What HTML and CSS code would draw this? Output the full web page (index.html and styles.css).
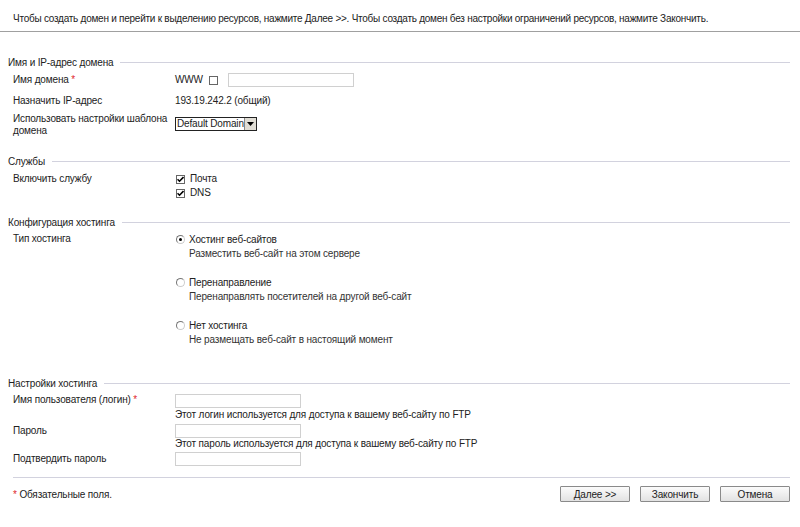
FILE: index.html
```html
<!DOCTYPE html>
<html lang="ru">
<head>
<meta charset="utf-8">
<link rel="stylesheet" href="styles.css">
</head>
<body>
<div class="intro">Чтобы создать домен и перейти к выделению ресурсов, нажмите Далее &gt;&gt;. Чтобы создать домен без настройки ограничений ресурсов, нажмите Закончить.</div>

<div class="legend s1">Имя и IP-адрес домена</div>
<div class="row r-domain">
  <div class="label">Имя домена <span class="req">*</span></div>
  <div class="value inline"><span>WWW</span><span class="cb"></span><span class="input wide"></span></div>
</div>
<div class="row r-ip">
  <div class="label">Назначить IP-адрес</div>
  <div class="value">193.19.242.2 (общий)</div>
</div>
<div class="row r-tpl">
  <div class="label two">Использовать настройки шаблона<br>домена</div>
  <div class="value"><span class="select"><span class="sel-text">Default Domain</span><span class="sel-btn"><svg width="7" height="4" viewBox="0 0 7 4"><path d="M0 0h7L3.5 4z" fill="#000"/></svg></span></span></div>
</div>

<div class="legend s2">Службы</div>
<div class="row r-svc">
  <div class="label">Включить службу</div>
  <div class="value col">
    <div class="opt"><span class="cb checked"><svg width="7" height="7" viewBox="0 0 7 7"><path d="M0.5 3.2l2 2L6.5 1" fill="none" stroke="#000" stroke-width="1.6"/></svg></span>Почта</div>
    <div class="opt"><span class="cb checked"><svg width="7" height="7" viewBox="0 0 7 7"><path d="M0.5 3.2l2 2L6.5 1" fill="none" stroke="#000" stroke-width="1.6"/></svg></span>DNS</div>
  </div>
</div>

<div class="legend s3">Конфигурация хостинга</div>
<div class="row r-type">
  <div class="label">Тип хостинга</div>
  <div class="value col">
    <div class="radio-opt">
      <div class="opt title"><span class="rb on"></span>Хостинг веб-сайтов</div>
      <div class="desc">Разместить веб-сайт на этом сервере</div>
    </div>
    <div class="radio-opt">
      <div class="opt title"><span class="rb"></span>Перенаправление</div>
      <div class="desc">Перенаправлять посетителей на другой веб-сайт</div>
    </div>
    <div class="radio-opt">
      <div class="opt title"><span class="rb"></span>Нет хостинга</div>
      <div class="desc">Не размещать веб-сайт в настоящий момент</div>
    </div>
  </div>
</div>

<div class="legend s4">Настройки хостинга</div>
<div class="row r-login">
  <div class="label">Имя пользователя (логин) <span class="req">*</span></div>
  <div class="value col"><span class="input"></span><div class="hint">Этот логин используется для доступа к вашему веб-сайту по FTP</div></div>
</div>
<div class="row r-pass">
  <div class="label">Пароль</div>
  <div class="value col"><span class="input"></span><div class="hint">Этот пароль используется для доступа к вашему веб-сайту по FTP</div></div>
</div>
<div class="row r-confirm">
  <div class="label">Подтвердить пароль</div>
  <div class="value col"><span class="input"></span></div>
</div>

<div class="footer">
  <div class="note"><span class="req">*</span> Обязательные поля.</div>
  <div class="buttons">
    <span class="btn">Далее &gt;&gt;</span>
    <span class="btn">Закончить</span>
    <span class="btn">Отмена</span>
  </div>
</div>
</body>
</html>
```

FILE: styles.css
```css
html, body {
  margin: 0;
  padding: 0;
  background: #fff;
}
body {
  font-family: "Liberation Sans", Arial, sans-serif;
  font-size: 10px;
  letter-spacing: -0.15px;
  color: #222;
  width: 800px;
}
.intro {
  height: 32px;
  line-height: 14px;
  padding-left: 13px;
  box-sizing: border-box;
  padding-top: 12px;
  border-bottom: 1px solid #a0a0a0;
  white-space: nowrap;
  letter-spacing: -0.25px;
}
.legend {
  display: flex;
  align-items: center;
  height: 14px;
  padding-left: 8px;
  margin-right: 10px;
  white-space: nowrap;
}
.legend::after {
  content: "";
  flex: 1;
  height: 1px;
  background: #d2d2de;
  margin-left: 7px;
}
.s1 { margin-top: 23px; }
.s2 { margin-top: 17px; }
.s3 { margin-top: 15px; }
.s4 { margin-top: 29px; }
.row {
  display: flex;
}
.label {
  width: 175px;
  padding-left: 13px;
  box-sizing: border-box;
  line-height: 14px;
  flex-shrink: 0;
}
.label.two {
  line-height: 12px;
  white-space: nowrap;
}
.value {
  line-height: 14px;
}
.inline {
  display: flex;
  align-items: center;
}
.col {
  display: flex;
  flex-direction: column;
}
.req { color: #e0282c; }
.r-domain { margin-top: 3px; height: 16px; align-items: center; }
.r-domain .label { line-height: 16px; }
.r-ip { margin-top: 6px; }
.r-tpl { margin-top: 5px; }
.r-svc { margin-top: 4px; }
.r-type { margin-top: 3px; }
.cb {
  display: inline-flex;
  align-items: center;
  justify-content: center;
  width: 7px;
  height: 7px;
  border: 1px solid #666;
  background: #fff;
  margin: 0 6px 0 0;
  flex-shrink: 0;
}
.inline .cb { margin: 0 10px 0 6px; }
.opt {
  display: flex;
  align-items: center;
}
.opt .cb { margin: 0 5px 0 1px; }
.input {
  display: block;
  width: 124px;
  height: 12px;
  border: 1px solid #d0d0d0;
  background: #fff;
}
.select {
  display: inline-flex;
  align-items: stretch;
  margin-top: 4px;
  height: 12px;
  border: 1px solid #222;
  background: #fff;
  line-height: 12px;
}
.sel-text { padding: 0 0 0 1px; }
.sel-btn {
  display: flex;
  align-items: center;
  justify-content: center;
  width: 11px;
  background: #e0ddd5;
  border-left: 1px solid #888;
}
.radio-opt { margin-bottom: 14px; }
.radio-opt:last-child { margin-bottom: 0; }
.radio-opt .title { line-height: 15px; }
.desc { padding-left: 14px; line-height: 14px; color: #333; }
.rb {
  position: relative;
  display: inline-block;
  width: 7px;
  height: 7px;
  border-radius: 50%;
  border: 1px solid #777;
  border-right-color: #ccc;
  border-bottom-color: #ccc;
  margin: 0 4px 0 1px;
  flex-shrink: 0;
}
.rb.on::after {
  content: "";
  position: absolute;
  left: 2px;
  top: 2px;
  width: 3px;
  height: 3px;
  border-radius: 50%;
  background: #000;
}
.r-login { margin-top: 3px; }
.r-login .value { padding-top: 1px; }
.hint { line-height: 12px; margin-top: 1px; }
.r-pass .hint { margin-top: 0; }
.r-pass { margin-top: 3px; }
.r-confirm { margin-top: 2px; }
.footer {
  margin: 11px 10px 0 13px;
  border-top: 1px solid #d2d2de;
  display: flex;
  justify-content: space-between;
  align-items: center;
  padding-top: 8px;
}
.buttons {
  display: flex;
  gap: 10px;
}
.btn {
  display: flex;
  align-items: center;
  justify-content: center;
  width: 68px;
  height: 14px;
  border: 1px solid #8a8a8a;
  border-radius: 1px;
  background: linear-gradient(#fbfbfb, #e2e2e2);
}
```
